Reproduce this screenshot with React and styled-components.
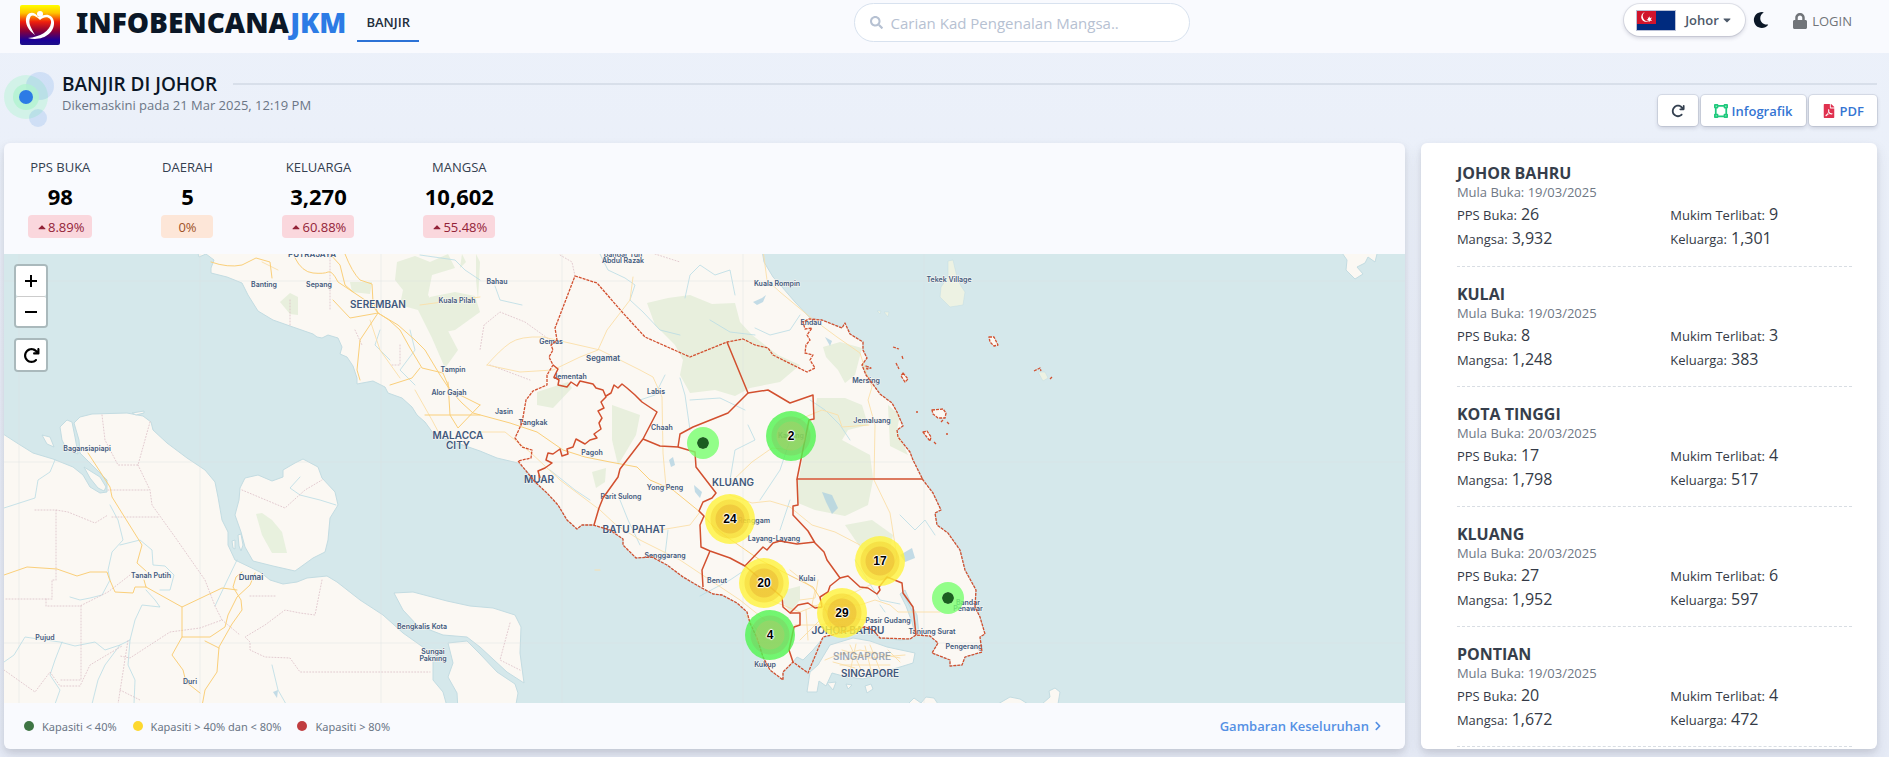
import { useState } from "react";
import styled, { createGlobalStyle } from "styled-components";
import { FaSearch, FaMoon, FaLock, FaVectorSquare, FaFilePdf, FaChevronRight, FaCaretUp, FaCaretDown } from "react-icons/fa";
import { FaArrowRotateRight } from "react-icons/fa6";

const GlobalStyle = createGlobalStyle`
  * {
    box-sizing: border-box;
  }
  body {
    margin: 0;
    min-height: 100vh;
    background: linear-gradient(#ecf1fa, #e6ebf6);
    font-family: "Open Sans", "Noto Sans", sans-serif;
    color: #343a46;
  }
  button, input {
    font-family: inherit;
  }
  h1, h2, p, ul, dl, dd {
    margin: 0;
    padding: 0;
  }
`;

const Header = styled.header`
  display: flex;
  align-items: flex-start;
  justify-content: space-between;
  height: 53px;
  padding: 3px 37px 0 20px;
  background-color: #f9fafe;
`;

const Left = styled.div`
  display: flex;
  align-items: flex-start;
`;

const Brand = styled.a`
  display: flex;
  align-items: center;
  gap: 16px;
  height: 40px;
  margin-top: 2px;
  color: #0b1727;
  font-family: "Noto Sans", sans-serif;
  font-size: 28px;
  font-weight: 900;
  line-height: 40px;
  text-decoration: none;
  span {
    padding-bottom: 6px;
  }
  b {
    color: #2c7be5;
    font-weight: 900;
  }
`;

const NavLink = styled.a`
  margin-left: 11px;
  padding: 10px 9px 9px;
  border-bottom: 2px solid #2c72d6;
  color: #232e3c;
  font-size: 13px;
  font-weight: 600;
  line-height: 18px;
  text-decoration: none;
`;

const Search = styled.label`
  display: flex;
  align-items: center;
  gap: 6px;
  width: 336px;
  height: 39px;
  padding: 0 15px;
  background-color: white;
  border: 1px solid #d8e2ef;
  border-radius: 20px;
  color: #b6c1d2;
  font-size: 13px;
`;

const SearchInput = styled.input`
  flex: 1;
  min-width: 0;
  border: none;
  outline: none;
  background: none;
  color: #5e6e82;
  font-size: 15px;
  &::placeholder {
    color: #b6c1d2;
  }
`;

const Right = styled.div`
  display: flex;
  align-items: center;
  padding-top: 1px;
`;

const StateButton = styled.button`
  display: flex;
  align-items: center;
  width: 121px;
  height: 32px;
  padding: 0 12px;
  background-color: white;
  border: none;
  border-radius: 16px;
  box-shadow: 0 0 0 1px rgba(43, 45, 80, 0.1), 0 2px 4px rgba(43, 45, 80, 0.2);
  color: #4d5969;
  font-size: 13px;
  font-weight: 600;
  cursor: pointer;
  span {
    margin: 0 2px 0 9px;
  }
`;

const ThemeButton = styled.button`
  display: flex;
  margin-left: 8px;
  padding: 0;
  background: none;
  border: none;
  color: #0b1727;
  font-size: 16px;
  cursor: pointer;
`;

const Login = styled.a`
  display: flex;
  align-items: center;
  gap: 4px;
  margin-left: 23px;
  padding-top: 2px;
  color: #717479;
  font-size: 13px;
  font-weight: 500;
  text-decoration: none;
  svg {
    font-size: 16px;
  }
`;

const Main = styled.main`
  padding: 19px 12px 8px 4px;
`;

const Heading = styled.section`
  display: flex;
  gap: 8px;
  height: 71px;
`;

const TitleBlock = styled.div`
  flex: 1;
`;

const TitleRow = styled.div`
  display: flex;
  align-items: center;
  gap: 16px;
  height: 24px;
`;

const Title = styled.h1`
  color: #0b1727;
  font-size: 19px;
  font-weight: 600;
  line-height: 24px;
`;

const Rule = styled.hr`
  flex: 1;
  height: 2px;
  margin: 0;
  border: none;
  background-color: #d8dfea;
`;

const SubRow = styled.div`
  display: flex;
  align-items: flex-start;
  justify-content: space-between;
`;

const Updated = styled.p`
  color: #6b7686;
  font-size: 13px;
  font-weight: 500;
  line-height: 18px;
`;

const Actions = styled.div`
  display: flex;
  gap: 3px;
  margin-top: -1px;
`;

const ActionButton = styled.button`
  display: flex;
  align-items: center;
  gap: 4px;
  height: 31px;
  padding: 0 13px;
  background-color: white;
  border: none;
  border-radius: 4px;
  box-shadow: 0 0 0 1px rgba(43, 45, 80, 0.1), 0 2px 4px rgba(43, 45, 80, 0.18);
  color: #3575d3;
  font-size: 13px;
  font-weight: 600;
  cursor: pointer;
  svg {
    color: ${(props) => props.$icon};
    font-size: 14px;
  }
`;

const Content = styled.div`
  display: grid;
  grid-template-columns: minmax(0, 43fr) minmax(0, 14fr);
  gap: 16px;
`;

const Card = styled.section`
  border-radius: 6px;
  overflow: hidden;
  background-color: ${(props) => (props.$plain ? "white" : "#f9fafe")};
  box-shadow: 0 7px 14px rgba(65, 69, 88, 0.12), 0 3px 6px rgba(0, 0, 0, 0.08);
`;

const Stats = styled.div`
  display: flex;
  gap: 69px;
  height: 111px;
  padding: 13px 24px 0;
`;

const Stat = styled.div`
  display: flex;
  flex-direction: column;
  align-items: center;
`;

const StatLabel = styled.div`
  color: #344050;
  font-size: 13px;
  font-weight: 500;
  line-height: 22px;
`;

const StatValue = styled.div`
  color: black;
  font-size: 22px;
  font-weight: 700;
  line-height: 37px;
`;

const Badge = styled.div`
  display: flex;
  align-items: center;
  justify-content: center;
  min-width: 52px;
  height: 23px;
  padding: 0 8px;
  border-radius: 4px;
  font-size: 13px;
  font-weight: 500;
  background-color: ${(props) => (props.$up ? "#fad7dd" : "#fde6d8")};
  color: ${(props) => (props.$up ? "#932338" : "#9d5228")};
`;

const MapBox = styled.div`
  position: relative;
  height: calc(100vh - 308px);
  min-height: 320px;
  overflow: hidden;
  background-color: #d5e8eb;
`;

const MapSvg = styled.svg`
  display: block;
  width: 100%;
  height: 100%;
`;

const Controls = styled.div`
  position: absolute;
  top: 10px;
  left: 10px;
  display: flex;
  flex-direction: column;
  gap: 10px;
`;

const ControlGroup = styled.div`
  display: flex;
  flex-direction: column;
  border: 2px solid rgba(0, 0, 0, 0.2);
  border-radius: 4px;
  background-clip: padding-box;
`;

const ControlButton = styled.button`
  display: flex;
  align-items: center;
  justify-content: center;
  width: 30px;
  height: 30px;
  padding: 0;
  background-color: white;
  border: none;
  border-radius: 2px;
  color: black;
  font-size: 17px;
  cursor: pointer;
  & + & {
    border-top: 1px solid #ccc;
  }
`;

const Cluster = styled.button`
  position: absolute;
  width: 50px;
  height: 50px;
  margin: -25px 0 0 -25px;
  padding: 0;
  border: none;
  border-radius: 50%;
  background: ${(props) =>
    props.$low
      ? "radial-gradient(circle, rgba(134,212,90,0.9) 14px, rgba(98,222,82,0.85) 15px, rgba(98,222,82,0.85) 19px, rgba(80,245,80,0.8) 20px)"
      : "radial-gradient(circle, rgba(240,200,48,0.93) 14px, rgba(248,224,50,0.88) 15px, rgba(248,224,50,0.88) 19px, rgba(255,243,60,0.8) 20px)"};
  color: black;
  font-family: "Liberation Sans", sans-serif;
  font-size: 12px;
  font-weight: 700;
  text-shadow: 1px 0 1px white, -1px 0 1px white, 0 1px 1px white, 0 -1px 1px white, 0 0 2px white;
  cursor: pointer;
`;

const Pin = styled.button`
  position: absolute;
  width: 32px;
  height: 32px;
  margin: -16px 0 0 -16px;
  padding: 0;
  border: 10px solid rgba(120, 255, 110, 0.8);
  border-radius: 50%;
  background-color: #1b5e20;
  background-clip: padding-box;
  cursor: pointer;
`;

const CardFooter = styled.div`
  display: flex;
  align-items: center;
  justify-content: space-between;
  height: 46px;
  padding: 0 22px 0 20px;
`;

const Legend = styled.ul`
  display: flex;
  gap: 16px;
  list-style: none;
`;

const LegendItem = styled.li`
  display: flex;
  align-items: center;
  gap: 8px;
  color: #6b7686;
  font-family: "Noto Sans", sans-serif;
  font-size: 11px;
  &::before {
    content: "";
    width: 10px;
    height: 10px;
    border-radius: 50%;
    background-color: ${(props) => props.$color};
  }
`;

const More = styled.a`
  display: flex;
  align-items: center;
  gap: 4px;
  color: #5590e4;
  font-size: 13px;
  font-weight: 600;
  text-decoration: none;
  svg {
    font-size: 10px;
  }
`;

const Districts = styled.div`
  height: 0;
  min-height: 100%;
  padding: 0 25px 0 36px;
  overflow: auto;
  scrollbar-width: none;
`;

const District = styled.article`
  height: 120px;
  padding-top: 16px;
  border-bottom: 1px dashed #d8dde3;
  &:first-child {
    height: 124px;
    padding-top: 19px;
  }
`;

const DistrictName = styled.h2`
  color: #363e4b;
  font-size: 16px;
  font-weight: 700;
  line-height: 22px;
`;

const Opened = styled.p`
  color: #6f7885;
  font-size: 13px;
  line-height: 17px;
`;

const Figures = styled.dl`
  display: grid;
  grid-template-columns: 54% 46%;
  margin-top: 1px;
  line-height: 24px;
`;

const Figure = styled.div`
  display: flex;
  align-items: baseline;
  gap: 4px;
  height: 24px;
  dt {
    font-size: 13px;
  }
  dd {
    font-size: 16px;
  }
`;

const stats = [
  { label: "PPS BUKA", value: "98", change: "8.89%", up: true },
  { label: "DAERAH", value: "5", change: "0%" },
  { label: "KELUARGA", value: "3,270", change: "60.88%", up: true },
  { label: "MANGSA", value: "10,602", change: "55.48%", up: true },
];

const districts = [
  { name: "JOHOR BAHRU", date: "19/03/2025", pps: "26", mukim: "9", mangsa: "3,932", keluarga: "1,301" },
  { name: "KULAI", date: "19/03/2025", pps: "8", mukim: "3", mangsa: "1,248", keluarga: "383" },
  { name: "KOTA TINGGI", date: "20/03/2025", pps: "17", mukim: "4", mangsa: "1,798", keluarga: "517" },
  { name: "KLUANG", date: "20/03/2025", pps: "27", mukim: "6", mangsa: "1,952", keluarga: "597" },
  { name: "PONTIAN", date: "19/03/2025", pps: "20", mukim: "4", mangsa: "1,672", keluarga: "472" },
];

const clusters = [
  { count: 2, x: 787, y: 182, low: true },
  { count: 24, x: 726, y: 265 },
  { count: 20, x: 760, y: 329 },
  { count: 17, x: 876, y: 307 },
  { count: 29, x: 838, y: 359 },
  { count: 4, x: 766, y: 381, low: true },
];

const pins = [
  { x: 699, y: 189 },
  { x: 944, y: 344 },
];

const land = [
  // peninsula
  "M197 250L199 257 206 254 214 260 211 268 211 273 227 277 242 283 248 295 258 311 273 320 290 326 313 334 317 337 322 338 328 335 338 338 342 347 340 354 347 357 353 366 357 378 357 384 373 381 385 387 388 393 402 398 412 407 417 415 425 422 433 433 453 442 460 444 480 451 497 458 518 463 527 471 538 484 547 493 558 505 567 520 577 529 582 525 593 525 610 530 623 539 623 545 636 558 652 557 667 565 683 577 700 587 713 594 722 595 737 603 747 612 750 623 757 638 763 657 770 670 783 680 783 672 793 662 797 657 803 660 813 650 823 638 843 632 865 627 880 638 900 640 910 639 915 635 912 622 906 606 900 594 905 590 911 604 917 615 919 635 930 636 938 643 932 653 950 660 950 666 962 665 965 657 982 652 980 637 985 634 980 617 975 607 976 590 965 570 960 550 948 533 937 525 935 513 941 510 933 493 923 480 913 460 910 452 898 437 897 430 903 426 897 412 892 403 880 394 872 383 866 375 862 365 867 358 863 350 863 342 850 334 845 323 842 328 822 320 810 318 795 302 782 287 773 277 764 262 762 250Z",
  // sumatra
  "M0 432L17 443 33 453 53 459 73 467 83 475 90 487 100 493 107 492 107 480 90 463 80 453 79 440 74 423 80 417 92 414 127 413 143 416 151 422 153 430 167 443 187 458 205 470 215 482 218 497 222 520 228 532 228 545 235 560 260 572 270 580 283 584 297 582 307 578 327 576 337 582 360 600 383 615 403 633 427 650 433 660 433 680 443 692 448 710 0 710Z",
  "M60 427L67 420 72 422 75 437 78 454 67 450 62 440Z",
  "M84 467L100 477 106 487 104 491 98 488 90 478Z",
  "M42 435L50 437 54 447 47 444Z",
  "M132 413L144 411 144 413 136 415Z",
  "M238 535L241 534 243 545 241 551 239 546ZM232 541L235 540 235 549 233 548Z",
  // rupat
  "M240 488L245 478 258 475 272 481 283 477 283 470 295 463 303 459 318 467 322 478 335 492 338 505 330 518 328 540 325 552 313 558 295 571 273 566 253 561 245 547 241 532 235 515 239 500Z",
  // bengkalis and padang
  "M394 593L413 592 447 601 470 606 493 608 515 615 521 627 520 653 524 683 507 672 480 647 467 637 443 635 417 625 403 610Z",
  "M448 643L467 641 480 654 497 672 515 684 518 693 515 710 458 710 457 693 448 677 453 663Z",
  // singapore
  "M818 665L830 645 853 638 870 641 887 647 915 653 913 663 900 667 880 673 863 679 843 676 832 673 826 686 819 681 817 692 807 692 810 672Z",
  "M827 683L836 682 833 690ZM846 684L852 685 848 689ZM865 686L871 684 873 689 867 693Z",
  // batam
  "M908 704L914 698 921 703 926 697 934 698 938 704ZM998 704L1010 697 1020 699 1028 704ZM1042 704L1050 697 1049 691 1055 688 1060 692 1058 704Z",
  "M1340 250L1347 260 1346 270 1355 279 1363 274 1357 267 1365 263 1368 257 1375 262 1378 250Z",
];

const islands = [
  "M948 261L953 260 957 277 961 286 965 292 963 305 950 307 940 297 941 287 948 277Z",
  "M1038 372L1045 372 1048 378 1043 381ZM877 311L881 311 880 314ZM884 312L889 312 888 317Z",
];

const forests = [
  "M647 303L668 298 690 295 712 304 735 303 740 322 752 335 778 355 800 365 780 382 750 388 735 396 715 390 690 393 680 375 683 360 675 345 655 325Z",
  "M823 347L840 342 862 348 855 375 845 383 838 370 826 357Z",
  "M817 398L845 398 862 405 868 425 848 430 842 440 870 455 873 478 799 478 806 440 812 425Z",
  "M797 480L873 480 868 505 845 516 815 510 798 503Z",
  "M845 525L872 520 893 535 888 560 862 550Z",
  "M537 392L568 382 572 388 553 408 537 405Z",
  "M612 405L640 415 636 435 618 465 612 440Z",
  "M397 262L415 256 430 262 448 254 455 268 432 275 428 295 437 310 458 350 445 368 432 338 418 310 400 305 403 290 395 280Z",
  "M430 297L455 292 475 296 480 312 455 330 435 334 424 318Z",
  "M350 282L372 282 370 294 352 292Z",
  "M280 302L290 293 298 297 298 315 290 314Z",
  "M256 514L262 513 272 520 282 532 287 553 272 553 262 535Z",
  "M785 590L800 586 800 600 790 612 783 602Z",
  "M888 405L900 415 897 430 908 455 890 446Z",
  "M592 472L606 468 605 482 596 488Z",
  "M476 254L480 262 478 300 476 280ZM462 254L466 262 460 268Z",
];

const highways = [
  "M295 258Q302 272 313 273T328 272 338 282L353 292 365 300 372 305 378 313 389 320 400 330 410 348 422 368 443 373 450 390 462 403 473 413 510 423 537 432 563 450 585 457 610 462 637 467 650 480 673 490 700 512 713 526 727 537 760 560 793 577 813 587 820 598 827 613 833 632",
  "M345 254Q352 272 360 280L372 284 373 302 378 313 398 325 415 340 425 350 440 375 450 390 480 405",
  "M211 262Q228 268 242 265L256 258 270 262 272 278",
  "M330 254L340 265 345 285 353 292M333 300L350 318 378 313 360 340 357 370 360 380M425 415H480M390 385L412 378 420 368M448 382L450 415 458 428 480 405",
  "M88 453L110 487 112 497 142 545 137 563 146 571M146 587L182 607 222 588 237 590M182 607V637H210L225 627 228 615 237 597 250 585 255 573M182 637L172 655 183 670 186 682 200 693",
  "M202 706L205 690 217 672 219 647 232 624 242 610 241 600 233 587 236 577 242 572 M205 641L219 648M146 587L135 587 133 593 115 592 109 578 107 572 90 572 77 576 57 569 27 567 4 575M144 580L146 587",
];

const roads = [
  "M487 365Q500 350 510 343T543 337L587 347 600 350 620 360 640 370 653 377 662 397 663 453 666 487",
  "M633 277L630 300 607 330 598 350 580 357 553 370 520 372 487 365",
  "M763 250L767 280 780 292 810 317 837 337 860 353 867 375 872 387 868 400 875 425 874 480 890 513 897 557 887 577 855 592 830 604",
  "M869 425L842 427 838 415 822 410 798 420M792 450L772 448 752 462 730 483M730 495L752 503 770 501 790 507 812 525 835 532 860 545M700 512L690 525 660 530 640 528",
  "M480 432H505L530 452 560 480 600 510 615 524 640 540 680 560 710 580 740 600 765 620M595 570H600",
  "M770 600L800 612 820 604 860 605 875 600 890 605 898 612 940 612M795 625H845M800 640L820 620M745 615L765 640",
  "M835 656L860 650 900 658M840 665H890M850 645L862 672M870 645L880 670M833 662L855 668M888 650L900 662M842 650L870 658 905 655M845 660L875 652M856 644L850 672M865 646L872 674M825 660L845 652",
  "M790 570L815 590 812 605 830 612 845 632M800 600L815 598 818 580M806 610L808 640M820 625L850 618 880 622",
  "M370 320L380 350 400 378M415 390L432 420 440 435M262 262L278 270M420 305L480 297",
];

const rivers = [
  "M110 505L118 520 123 540 112 552 108 570 110 580 102 595 90 598 80 600 70 597M120 545L140 540 152 550 153 565 165 566 174 575 170 590 160 590M146 590L155 600 160 607 142 605 135 620 130 640 120 645 105 650 95 642 75 646 60 642 45 640 25 637 14 655 4 662M62 642L55 660 50 675 60 690 55 704M120 645L105 665 98 680 92 704M130 640L128 665 135 680 134 704M237 560L225 585 215 606M272 665L278 690 286 704",
  "M4 508L35 498 38 480 50 472 55 460M300 477L290 488 300 495 320 500 336 505",
  "M420 255L455 260 465 270 480 280M495 286L500 300 522 305M600 254L608 270 625 278 635 285 630 300 643 312 660 330 680 335M685 298L690 275 700 265 715 275 730 270 735 295M710 320L730 332 755 335M800 315L790 330 770 335 755 328",
  "M665 375L655 395 640 400M680 378L685 395 690 430M690 400L720 398 745 410M748 425L755 440 735 450 730 480M810 400L825 410 840 425 850 440M790 440L780 470 760 500M620 500L628 520 640 545M668 530L665 555M790 500L780 530M900 515L915 530 925 520 935 535M550 470L575 490 590 500",
  "M855 560L880 600 900 604M700 596L730 580 745 570M410 330L415 350 400 370 415 385M380 330L375 345 390 360",
  "M903 593L913 613 916 625M880 605L885 612",
];

const borders = [
  "M102 415L105 440 118 465 138 465 150 422M138 465L150 490 152 505 175 537 205 580 215 606 222 620 200 628 170 632 130 658 120 656M108 490H148M112 517H160M35 510H56V580H52V599H4M56 510L68 512 95 523 108 515M46 599V606L80 606 108 592 130 575M81 606V680H60M4 670L35 692 50 672 60 686H80L90 665 122 646M322 580L315 615 300 613 285 610 265 625 245 637 250 642 250 650 265 657 290 658 300 672 430 672",
  "M275 596L250 596M222 620L240 635M120 690L140 700M118 704L128 640M242 490L285 508 305 490 322 480",
  "M550 340L525 322 500 312 484 325 480 350M490 365L530 380M330 254V310M355 330L362 345M290 300V325M400 345V365H390M655 254L680 262M575 276L572 262 560 255M510 623L500 660 520 670",
];

const districtLines = [
  "M553 365L558 369 554 377 559 380 558 385 567 387 571 382 577 386 580 381 593 384 596 388 603 390 606 397 601 402 604 408 598 411 602 418 599 423 601 429 594 434 597 438 590 440 585 444 576 439 573 447 567 449 568 454 562 456 560 449 553 454 548 453 546 460 552 463 545 468 538 471 540 478",
  "M606 396L611 393 614 385 618 388 622 384 627 388 635 395 642 402 657 412 643 439 620 469 618 477 603 498 599 508 594 525",
  "M643 439L660 446 678 447 695 452 696 467 716 493 712 498 703 502 699 511 704 516 700 525 701 547 710 551 730 558 745 566 763 547 767 550 773 543 780 541 797 544 815 542",
  "M710 551L702 570 703 587",
  "M727 342L748 393 728 413 693 427 680 434 678 447",
  "M748 393L768 390 790 403 813 395 814 419 809 420 797 479H923",
  "M797 479L798 505 793 506 793 515 808 531 815 543 824 552 827 560 840 578 830 586 828 592 820 597 822 607 815 608 808 603 798 605 790 613 783 607 782 597 745 566",
  "M790 613L800 613 800 625 794 627 789 650 793 662",
  "M840 578L848 576 860 587 868 588 877 594 880 590 879 587 887 577L902 583 903 593 913 607 916 635",
];

// state outline and the islands that belong to it
const outline = [
  "M575 276L597 283 623 313 645 337 690 357 727 342 743 339 755 345 768 348 773 355 807 372 815 368 810 360 813 355 805 353 806 345 810 340 807 335 812 328 805 329 803 322 809 319 822 320 842 328 845 323 850 334 863 342 863 350 867 358 862 365 866 375 872 383 880 394 892 403 897 412 903 426 897 430 898 437 910 452 913 460 923 480 933 493 941 510 935 513 937 525 948 533 960 550 965 570 976 590 975 607 980 617 985 634 980 637 982 652 965 657 962 665 950 666 950 660 932 653 938 643 930 636 916 635 910 639 880 638 873 630 865 627 823 637 808 673 793 662 783 672 783 680 770 670 763 657 757 638 750 623 747 612 737 603 722 595 713 594 700 587 683 577 667 565 652 557 636 558 623 545 623 539 610 530 593 525 582 525 577 529 567 520 558 505 547 493 535 482 518 461 531 458 532 450 522 447 515 438 522 423 526 400 533 391 547 385 547 375 553 365 549 357 553 350 551 345 557 340 555 328Z",
  "M866 366L871 368 867 369Z",
  "M1034 371L1040 368 1041 371M893 347L899 349M902 356L903 359M896 363L899 369M916 412H918M941 422L943 420M947 422L949 424M946 434H948M934 442L936 444M1050 379L1052 377",
];

const isles = [
  "M989 337L994 337 998 345 994 346 990 342Z",
  "M903 373L908 379 905 382 901 376Z",
  "M932 410L943 409 946 413 945 418 938 418 933 414Z",
  "M923 432L927 431 931 437 930 441 926 436Z",
];

const labels = [
  ["PUTRAJAYA", 312, 257, "mid"],
  ["Banting", 264, 287],
  ["Sepang", 319, 287],
  ["SEREMBAN", 378, 308, "big"],
  ["Kuala Pilah", 457, 303],
  ["Bahau", 497, 284],
  ["Bandar Tun", 623, 257],
  ["Abdul Razak", 623, 263],
  ["Kuala Rompin", 777, 286],
  ["Tekek Village", 949, 282],
  ["Endau", 811, 325],
  ["Gemas", 551, 344],
  ["Segamat", 603, 361, "mid"],
  ["Jementah", 570, 379],
  ["Labis", 656, 394],
  ["Tampin", 453, 372],
  ["Alor Gajah", 449, 395],
  ["Jasin", 504, 414],
  ["Tangkak", 533, 425],
  ["Chaah", 662, 430],
  ["Mersing", 866, 383],
  ["Jemaluang", 872, 423],
  ["Pagoh", 592, 455],
  ["MALACCA", 458, 439, "big"],
  ["CITY", 458, 449, "big"],
  ["MUAR", 539, 483, "big"],
  ["Kahang", 791, 438],
  ["KLUANG", 733, 486, "big"],
  ["Yong Peng", 665, 490],
  ["Parit Sulong", 621, 499],
  ["Renggam", 754, 523],
  ["BATU PAHAT", 634, 533, "big"],
  ["Layang-Layang", 774, 541],
  ["Senggarang", 665, 558],
  ["Benut", 717, 583],
  ["Kulai", 807, 581],
  ["Pasir Gudang", 888, 623],
  ["JOHOR BAHRU", 848, 634, "big"],
  ["SINGAPORE", 862, 660, "ghost"],
  ["SINGAPORE", 870, 677, "big"],
  ["Kukup", 765, 667],
  ["Bandar", 968, 605],
  ["Penawar", 968, 611],
  ["Tanjung Surat", 932, 634],
  ["Pengerang", 964, 649],
  ["Bagansiapiapi", 87, 451],
  ["Tanah Putih", 151, 578],
  ["Dumai", 251, 580, "mid"],
  ["Pujud", 45, 640],
  ["Duri", 190, 684],
  ["Bengkalis Kota", 422, 629],
  ["Sungai", 433, 654],
  ["Pakning", 433, 661],
];

const labelSizes = { big: 10, mid: 8, ghost: 10 };

const Logo = () => (
  <svg width="40" height="40" viewBox="0 0 40 40">
    <defs>
      <linearGradient id="logo" x1="0" y1="0" x2="0" y2="1">
        <stop offset="0" stopColor="#ffff00" />
        <stop offset="0.2" stopColor="#ffc400" />
        <stop offset="0.42" stopColor="#f0200c" />
        <stop offset="0.65" stopColor="#8a0038" />
        <stop offset="0.88" stopColor="#1a0098" />
        <stop offset="1" stopColor="#1c1088" />
      </linearGradient>
    </defs>
    <rect width="40" height="40" rx="2" fill="url(#logo)" />
    <path
      d="M18 12C14 5 5 7 6 17C7 23 11 27 15 30C11 23 8 18 10 13C11 9 15 10 20 15C25 10 32 12 31 18C30 26 20 32 8 33C22 37 35 28 34 17C33 9 25 8 20 12Z"
      fill="white"
    />
    <circle cx="20" cy="9" r="3" fill="white" />
  </svg>
);

const Flag = () => (
  <svg width="40" height="21" viewBox="0 0 40 21">
    <rect x="0.500" y="0.500" width="39" height="20" fill="#002b7f" stroke="#b9c0d6" />
    <rect x="1" y="1" width="19" height="13" fill="#d0142c" />
    <path d="M9 2A5 5 0 1 0 13 11A5 5 0 0 1 9 2Z" fill="white" />
    <path d="M13 6l1 2 2-.5-1.200 1.800L16 11l-2-.3-1 1.500-.6-1.800-2-.4 1.700-1-.3-2 1.200 1z" fill="white" />
  </svg>
);

const Blobs = () => (
  <svg width="50" height="56" viewBox="0 0 50 56">
    <circle cx="22" cy="25" r="22" fill="#d2f2e8" />
    <circle cx="36" cy="14" r="14" fill="#2c7be5" opacity="0.14" />
    <circle cx="34" cy="46" r="9" fill="#2c7be5" opacity="0.14" />
    <circle cx="22" cy="25" r="13" fill="#b2f3cf" opacity="0.8" />
    <circle cx="22" cy="25" r="7" fill="#2c7be5" />
  </svg>
);

const BaseMap = () => (
  <MapSvg viewBox="4 254 1401 449" preserveAspectRatio="xMinYMin slice" role="img" aria-label="Peta Johor">
    <g fill="#fbf8f3" stroke="#c3dce2" strokeWidth="1" strokeLinejoin="round">
      {land.map((d) => <path key={d} d={d} />)}
    </g>
    <g fill="#edf2e3" stroke="#c3dce2" strokeWidth="0.500">
      {islands.map((d) => <path key={d} d={d} />)}
    </g>
    <g fill="#e6efdb" opacity="0.9">
      {forests.map((d) => <path key={d} d={d} />)}
    </g>
    <g fill="none" strokeLinejoin="round" strokeLinecap="round">
      <g stroke="#dfe3e2" strokeWidth="1" opacity="0.4">
        <path d="M19 254V704M200 254V704M381 254V704M562 254V704M743 254V704M924 254V704M4 281H1405M4 462H1405M4 643H1405" />
      </g>
      <g stroke="#b9dce4" strokeWidth="0.800">
        {rivers.map((d) => <path key={d} d={d} />)}
      </g>
      <g stroke="#dcbfc6" strokeWidth="0.800" strokeDasharray="1 2">
        {borders.map((d) => <path key={d} d={d} />)}
      </g>
      <g stroke="#fbdfa8" strokeWidth="0.900">
        {roads.map((d) => <path key={d} d={d} />)}
      </g>
      <g stroke="#facf7a" strokeWidth="1">
        {highways.map((d) => <path key={d} d={d} />)}
      </g>
    </g>
    <g fill="#a9cfe0">
      <path d="M753 302L762 298 766 295 763 302 757 305ZM825 337L832 341 830 346ZM669 460L673 457 675 465 671 467ZM694 485L702 492 700 498 695 492ZM822 492L832 495 838 508 832 514 826 502ZM900 555L912 548 915 558 905 562ZM273 692L278 690 277 698Z" opacity="0.7" />
    </g>
    <g
      fill="#3f587d"
      stroke="#fbf8f3"
      strokeWidth="1"
      paintOrder="stroke"
      textAnchor="middle"
      fontFamily="Inter, sans-serif"
      fontWeight="600"
    >
      {labels.map(([name, x, y, kind]) => (
        <text key={name + y} x={x} y={y} fontSize={labelSizes[kind] || 7} opacity={kind === "ghost" ? 0.5 : 1}>
          {name}
        </text>
      ))}
    </g>
    <g fill="none" stroke="#d2502f" strokeLinejoin="round">
      <g strokeWidth="1.500">
        {districtLines.map((d) => <path key={d} d={d} />)}
      </g>
      <g strokeWidth="1.300" strokeDasharray="3 1">
        {outline.map((d) => <path key={d} d={d} />)}
      </g>
      <g strokeWidth="1.300" strokeDasharray="3 1" fill="#fbf8f3">
        {isles.map((d) => <path key={d} d={d} />)}
      </g>
    </g>
  </MapSvg>
);

const App = () => {
  const [query, setQuery] = useState("");

  return (
    <>
      <GlobalStyle />
      <Header>
        <Left>
          <Brand href="#">
            <Logo />
            <span>
              INFOBENCANA<b>JKM</b>
            </span>
          </Brand>
          <NavLink href="#banjir">BANJIR</NavLink>
        </Left>
        <Search>
          <FaSearch />
          <SearchInput
            type="text"
            aria-label="Carian"
            placeholder="Carian Kad Pengenalan Mangsa.."
            value={query}
            onChange={(e) => setQuery(e.target.value)}
          />
        </Search>
        <Right>
          <StateButton>
            <Flag />
            <span>Johor</span>
            <FaCaretDown size={12} />
          </StateButton>
          <ThemeButton aria-label="Tema">
            <FaMoon />
          </ThemeButton>
          <Login href="#login">
            <FaLock />
            LOGIN
          </Login>
        </Right>
      </Header>
      <Main>
        <Heading>
          <Blobs />
          <TitleBlock>
            <TitleRow>
              <Title>BANJIR DI JOHOR</Title>
              <Rule />
            </TitleRow>
            <SubRow>
              <Updated>Dikemaskini pada 21 Mar 2025, 12:19 PM</Updated>
              <Actions>
                <ActionButton $icon="#344050" aria-label="Muat semula">
                  <FaArrowRotateRight />
                </ActionButton>
                <ActionButton $icon="#1fc97d">
                  <FaVectorSquare />
                  Infografik
                </ActionButton>
                <ActionButton $icon="#e0314f">
                  <FaFilePdf />
                  PDF
                </ActionButton>
              </Actions>
            </SubRow>
          </TitleBlock>
        </Heading>
        <Content>
          <Card>
            <Stats>
              {stats.map((s) => (
                <Stat key={s.label}>
                  <StatLabel>{s.label}</StatLabel>
                  <StatValue>{s.value}</StatValue>
                  <Badge $up={s.up}>
                    {s.up && <FaCaretUp size={12} />}
                    {s.change}
                  </Badge>
                </Stat>
              ))}
            </Stats>
            <MapBox>
              <BaseMap />
              {pins.map((p) => (
                <Pin key={p.x} aria-label="PPS" style={{ left: p.x, top: p.y }} />
              ))}
              {clusters.map((c) => (
                <Cluster key={c.count} $low={c.low} style={{ left: c.x, top: c.y }}>
                  {c.count}
                </Cluster>
              ))}
              <Controls>
                <ControlGroup>
                  <ControlButton aria-label="Zum masuk">
                    <svg width="14" height="14" viewBox="0 0 14 14" stroke="black" strokeWidth="2">
                      <path d="M1 7H13M7 1V13" />
                    </svg>
                  </ControlButton>
                  <ControlButton aria-label="Zum keluar">
                    <svg width="14" height="14" viewBox="0 0 14 14" stroke="black" strokeWidth="2">
                      <path d="M1 7H13" />
                    </svg>
                  </ControlButton>
                </ControlGroup>
                <ControlGroup>
                  <ControlButton aria-label="Set semula">
                    <FaArrowRotateRight />
                  </ControlButton>
                </ControlGroup>
              </Controls>
            </MapBox>
            <CardFooter>
              <Legend>
                <LegendItem $color="#3f7544">Kapasiti &lt; 40%</LegendItem>
                <LegendItem $color="#fdd82f">Kapasiti &gt; 40% dan &lt; 80%</LegendItem>
                <LegendItem $color="#c03d40">Kapasiti &gt; 80%</LegendItem>
              </Legend>
              <More href="#keseluruhan">
                Gambaran Keseluruhan
                <FaChevronRight />
              </More>
            </CardFooter>
          </Card>
          <Card $plain>
            <Districts>
              {districts.map((d) => (
                <District key={d.name}>
                  <DistrictName>{d.name}</DistrictName>
                  <Opened>Mula Buka: {d.date}</Opened>
                  <Figures>
                    <Figure>
                      <dt>PPS Buka:</dt>
                      <dd>{d.pps}</dd>
                    </Figure>
                    <Figure>
                      <dt>Mukim Terlibat:</dt>
                      <dd>{d.mukim}</dd>
                    </Figure>
                    <Figure>
                      <dt>Mangsa:</dt>
                      <dd>{d.mangsa}</dd>
                    </Figure>
                    <Figure>
                      <dt>Keluarga:</dt>
                      <dd>{d.keluarga}</dd>
                    </Figure>
                  </Figures>
                </District>
              ))}
            </Districts>
          </Card>
        </Content>
      </Main>
    </>
  );
};

export default App;
